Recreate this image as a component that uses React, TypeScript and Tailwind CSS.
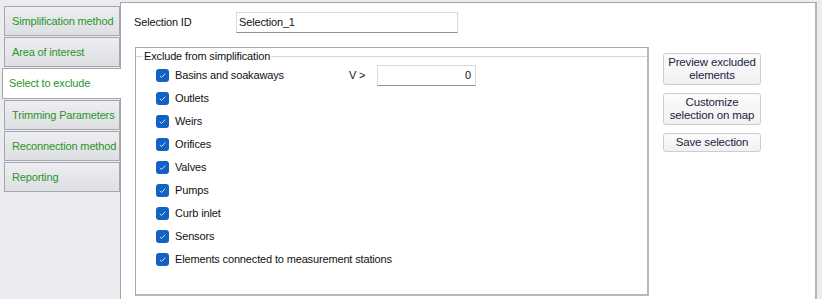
const tabs = [
  "Simplification method",
  "Area of interest",
  "Select to exclude",
  "Trimming Parameters",
  "Reconnection method",
  "Reporting",
];

const items = [
  "Basins and soakaways",
  "Outlets",
  "Weirs",
  "Orifices",
  "Valves",
  "Pumps",
  "Curb inlet",
  "Sensors",
  "Elements connected to measurement stations",
];

const Check = () => (
  <span className="w-[13px] h-[13px] mr-[6px] rounded-[3px] bg-[#1262c4] flex items-center justify-center shrink-0">
    <svg width="9" height="9" viewBox="0 0 9 9" fill="none">
      <path d="M1.8 4.8 L3.6 6.5 L7.2 2.6" stroke="#cfe0f5" strokeWidth="1" />
    </svg>
  </span>
);

const SideButton = ({ children }: { children: React.ReactNode }) => (
  <button className="w-[98px] rounded-[3px] border border-[#cdcdd2] bg-gradient-to-b from-[#fbfbfb] to-[#f1f1f3] text-[#1b1d45] text-[11.5px] leading-[13px] py-[2px] text-center">
    {children}
  </button>
);

export default function App() {
  return (
    <div
      className="w-[822px] h-[299px] bg-[#ebecef] flex overflow-hidden text-[11px] tracking-[-0.15px] text-[#111]"
      style={{ fontFamily: '"Liberation Sans", Arial, sans-serif' }}
    >
      {/* tabs */}
      <div className="w-[120px] shrink-0 pt-[6px] pl-[4px] flex flex-col gap-[1px]">
        {tabs.map((t) =>
          t === "Select to exclude" ? (
            <div
              key={t}
              className="relative z-10 ml-[-2px] mr-[-1px] h-[31px] bg-white border border-r-0 border-[#a6a6ae] flex items-center pl-[6px] text-[#26962a]"
            >
              {t}
            </div>
          ) : (
            <div
              key={t}
              className="h-[30px] border border-[#a6a6ae] bg-gradient-to-b from-[#eeeef1] to-[#dedfe3] flex items-center pl-[7px] text-[#26962a]"
            >
              {t}
            </div>
          )
        )}
      </div>

      {/* main panel */}
      <div className="mt-[2px] w-[697px] h-[310px] bg-white border border-[#a3a3ab] border-r-2 border-r-[#b4b4bc] pl-[13px] pt-[9px] shrink-0">
        <div className="flex items-center h-[21px]">
          <span className="w-[102px]">Selection ID</span>
          <div className="w-[222px] h-[21px] border border-[#dadadd] border-b-[#8e8e96] flex items-center pl-[2px]">
            Selection_1
          </div>
        </div>

        <div className="flex mt-[14px]">
          {/* group */}
          <div className="ml-[1px] w-[514px] h-[249px] border border-[#a8a8b0] border-r-2 border-b-2 border-r-[#b8b8c0] border-b-[#b8b8c0] pt-[2px]">
            <fieldset className="border-t border-[#d8d8dc] h-full">
              <legend className="ml-[7px] px-[1px] leading-[12px]">Exclude from simplification</legend>
              <div className="flex flex-col pt-[2px] pl-[20px]">
                {items.map((it, i) => (
                  <div key={it} className="h-[23px] flex items-center whitespace-nowrap">
                    <Check />
                    <span className={i === 0 ? "w-[174px]" : ""}>{it}</span>
                    {i === 0 && (
                      <>
                        <span className="w-[28px]">V &gt;</span>
                        <div className="w-[99px] h-[21px] border border-[#dadadd] border-b-[#8e8e96] flex items-center justify-end pr-[4px]">
                          0
                        </div>
                      </>
                    )}
                  </div>
                ))}
              </div>
            </fieldset>
          </div>

          {/* buttons */}
          <div className="ml-[14px] mt-[6px] flex flex-col gap-[8px]">
            <SideButton>
              Preview excluded
              <br />
              elements
            </SideButton>
            <SideButton>
              Customize
              <br />
              selection on map
            </SideButton>
            <SideButton>Save selection</SideButton>
          </div>
        </div>
      </div>
    </div>
  );
}
